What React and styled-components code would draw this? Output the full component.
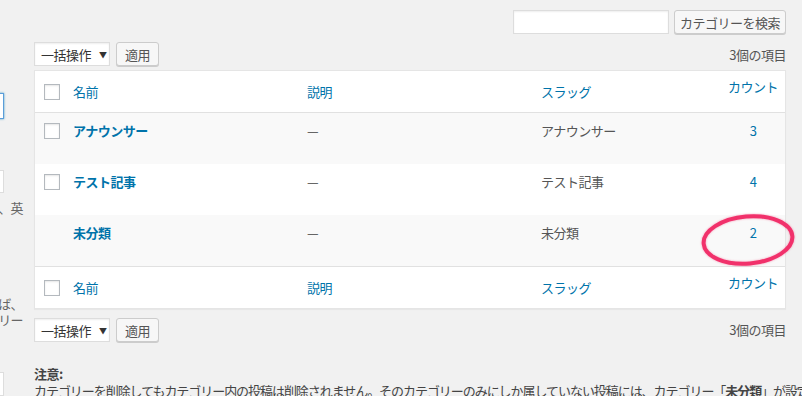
import React from "react";
import styled, { createGlobalStyle } from "styled-components";

const GlobalStyle = createGlobalStyle`
  body {
    margin: 0;
    background: #f1f1f1;
    font-family: "Noto Sans CJK JP", "Noto Sans", sans-serif;
    font-size: 13px;
    color: #444;
  }
`;

const rows = [
  { name: "アナウンサー", slug: "アナウンサー", count: 3, check: true },
  { name: "テスト記事", slug: "テスト記事", count: 4, check: true },
  { name: "未分類", slug: "未分類", count: 2, check: false },
];

function BulkBar({ top }) {
  return (
    <NavRow $top={top}>
      <Select>
        一括操作
        <Arrow>▼</Arrow>
      </Select>
      <Button>適用</Button>
      <ItemCount $top={top}>3個の項目</ItemCount>
    </NavRow>
  );
}

function HeadRow({ footer }) {
  return (
    <HeaderRow $footer={footer}>
      <CheckCell $head>
        <Checkbox />
      </CheckCell>
      <HeadCell>名前</HeadCell>
      <HeadCell>説明</HeadCell>
      <HeadCell>スラッグ</HeadCell>
      <HeadCell $num>カウント</HeadCell>
    </HeaderRow>
  );
}

export default function App() {
  return (
    <Page>
      <GlobalStyle />
      <LeftCol>
        <FocusInput />
        <SideInput $top={51} />
        <SideText $top={7}>ドや名称、英</SideText>
        <SideText $top={80}>
          <span>の他の説明の語ば、</span>
          <span>り、カテゴリー</span>
        </SideText>
        <SideInput $top={44} />
      </LeftCol>
      <Main>
        <SearchBar>
          <SearchInput />
          <Button $wide>カテゴリーを検索</Button>
        </SearchBar>
        <BulkBar top />
        <Table>
          <HeadRow />
          {rows.map((r, i) => (
            <BodyRow key={r.name} $alt={i % 2 === 0}>
              <CheckCell>{r.check && <Checkbox />}</CheckCell>
              <NameCell>{r.name}</NameCell>
              <Cell>—</Cell>
              <Cell $muted>{r.slug}</Cell>
              <NumCell>{r.count}</NumCell>
            </BodyRow>
          ))}
          <HeadRow footer />
        </Table>
        <BulkBar />
        <Note>
          <NoteTitle>注意:</NoteTitle>
          <NoteText>
            カテゴリーを削除してもカテゴリー内の投稿は削除されません。そのカテゴリーのみにしか属していない投稿には、カテゴリー「<b>未分類</b>」が設定されます。
          </NoteText>
        </Note>
      </Main>
      <Marker viewBox="0 0 98 58">
        <ellipse
          cx="49"
          cy="28"
          rx="44.5"
          ry="23.5"
          fill="none"
          stroke="#f1316b"
          strokeWidth="4"
          transform="rotate(-5 49 28)"
        />
      </Marker>
    </Page>
  );
}

const Page = styled.div`
  position: relative;
  display: flex;
  width: 802px;
  height: 396px;
  overflow: hidden;
`;

const LeftCol = styled.div`
  width: 34px;
  flex: none;
  display: flex;
  flex-direction: column;
  overflow: hidden;
`;

const FocusInput = styled.div`
  margin-top: 93px;
  margin-left: -30px;
  width: 32px;
  height: 24px;
  background: #fff;
  border: 1px solid #5b9dd9;
  box-shadow: 0 0 2px rgba(30, 140, 190, 0.8);
`;

const SideInput = styled.div`
  margin-top: ${(p) => p.$top}px;
  margin-left: -30px;
  width: 32px;
  height: 22px;
  background: #fff;
  border: 1px solid #ddd;
`;

const SideText = styled.div`
  margin-top: ${(p) => p.$top}px;
  width: 23px;
  display: flex;
  flex-direction: column;
  align-items: flex-end;
  white-space: nowrap;
  line-height: 16px;
  color: #666;
  font-size: 13px;
  letter-spacing: -0.6px;
`;

const Main = styled.div`
  width: 752px;
  flex: none;
  display: flex;
  flex-direction: column;
`;

const SearchBar = styled.div`
  display: flex;
  justify-content: flex-end;
  gap: 5px;
  margin-top: 10px;
  height: 25px;
`;

const SearchInput = styled.div`
  width: 154px;
  height: 22px;
  background: #fff;
  border: 1px solid #ddd;
  box-shadow: inset 0 1px 2px rgba(0, 0, 0, 0.07);
`;

const Button = styled.div`
  box-sizing: border-box;
  height: 24px;
  width: ${(p) => (p.$wide ? "112px" : "43px")};
  display: flex;
  align-items: center;
  justify-content: center;
  background: #f7f7f7;
  border: 1px solid #ccc;
  border-radius: 3px;
  box-shadow: 0 1px 0 #ccc;
  color: #555;
  font-size: 13px;
  letter-spacing: -0.5px;
`;

const NavRow = styled.div`
  display: flex;
  align-items: center;
  gap: 6px;
  height: 24px;
  margin-top: ${(p) => (p.$top ? "8px" : "9px")};
  margin-bottom: ${(p) => (p.$top ? "4px" : "0")};
`;

const Select = styled.div`
  box-sizing: border-box;
  width: 76px;
  height: 24px;
  display: flex;
  align-items: center;
  padding: 0 0 0 6px;
  background: #fff;
  border: 1px solid #ddd;
  box-shadow: inset 0 1px 2px rgba(0, 0, 0, 0.07);
  color: #333;
  font-size: 13px;
  letter-spacing: -0.5px;
`;

const Arrow = styled.span`
  margin-left: 8px;
  font-size: 8px;
  color: #333;
`;

const ItemCount = styled.div`
  margin-left: auto;
  align-self: ${(p) => (p.$top ? "flex-end" : "center")};
  line-height: 18px;
  margin-bottom: ${(p) => (p.$top ? "2px" : "0")};
  color: #555;
  letter-spacing: -0.5px;
`;

const Table = styled.div`
  background: #fff;
  border: 1px solid #e5e5e5;
  box-shadow: 0 1px 1px rgba(0, 0, 0, 0.04);
`;

const grid = `
  display: grid;
  grid-template-columns: 28px 234px 234px 190px 64px;
`;

const HeaderRow = styled.div`
  ${grid}
  height: 41px;
  align-items: center;
  border-bottom: ${(p) => (p.$footer ? "none" : "1px solid #e1e1e1")};
  border-top: ${(p) => (p.$footer ? "1px solid #e1e1e1" : "none")};
`;

const BodyRow = styled.div`
  ${grid}
  height: 51px;
  align-items: start;
  background: ${(p) => (p.$alt ? "#f9f9f9" : "#fff")};
`;

const CheckCell = styled.div`
  padding-left: 9px;
  padding-top: ${(p) => (p.$head ? "0" : "10px")};
  display: flex;
`;

const Checkbox = styled.div`
  width: 14px;
  height: 14px;
  background: #fff;
  border: 1px solid #b4b9be;
  box-shadow: inset 0 1px 2px rgba(0, 0, 0, 0.1);
`;

const HeadCell = styled.div`
  padding: 0 10px;
  color: #0073aa;
  line-height: 19px;
  letter-spacing: -0.5px;
  ${(p) =>
    p.$num &&
    `
    align-self: start;
    padding: 6px 0 0;
    text-align: center;
  `}
`;

const Cell = styled.div`
  padding: 8px 10px 0;
  line-height: 20px;
  color: ${(p) => (p.$muted ? "#555" : "#444")};
  letter-spacing: -0.5px;
`;

const NameCell = styled(Cell)`
  color: #0073aa;
  font-weight: 700;
`;

const NumCell = styled(Cell)`
  padding: 8px 0 0;
  text-align: center;
  color: #0073aa;
`;

const Note = styled.div`
  margin-top: 24px;
  white-space: nowrap;
  color: #444;
`;

const NoteTitle = styled.div`
  font-weight: 700;
  line-height: 16px;
  letter-spacing: -0.5px;
`;

const NoteText = styled.div`
  line-height: 17px;
  font-size: 13px;
  letter-spacing: -1.05px;
`;

const Marker = styled.svg`
  position: absolute;
  left: 699px;
  top: 212px;
  width: 98px;
  height: 58px;
  filter: drop-shadow(0 0 1px rgba(241, 49, 107, 0.45));
`;
